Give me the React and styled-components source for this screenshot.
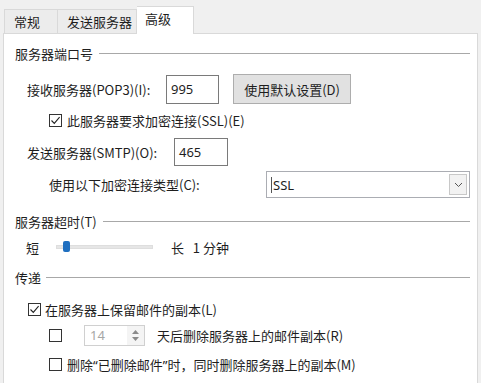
import React from "react";
import styled, { createGlobalStyle, css } from "styled-components";

const Global = createGlobalStyle`
  html, body { margin: 0; padding: 0; background: #f0f0f0; }
  body { font-family: "Noto Sans CJK SC", "Noto Sans", sans-serif; font-size: 13px; color: #1e1e1e; }
  * { box-sizing: border-box; }
`;

const Page = styled.div`
  width: 481px;
  height: 383px;
  overflow: hidden;
  background: #f0f0f0;
  padding: 0 3px 0 3px;
`;

const TabStrip = styled.div`
  display: flex;
  align-items: flex-end;
  height: 33px;
  padding-left: 1px;
  position: relative;
  z-index: 1;
`;

const Tab = styled.div`
  width: ${(p) => p.$w}px;
  height: 24px;
  display: flex;
  align-items: center;
  padding-left: ${(p) => p.$pl}px;
  border: 1px solid #d9d9d9;
  border-bottom: none;
  border-left-width: ${(p) => (p.$first ? "1px" : "0")};
  background: #ececec;
  color: #1e1e1e;
  line-height: 1;
  ${(p) =>
    p.$active &&
    css`
      height: 28px;
      background: #fff;
      margin-bottom: -1px;
      padding-bottom: 4px;
    `}
`;

const Panel = styled.div`
  background: #fff;
  border: 1px solid #d9d9d9;
  height: 360px;
  padding: 10px 7px 0 11px;
`;

const Row = styled.div`
  display: flex;
  align-items: center;
  height: ${(p) => p.$h || 18}px;
  margin-top: ${(p) => p.$mt || 0}px;
  padding-left: ${(p) => p.$indent || 0}px;
  white-space: nowrap;
`;

const GroupTitle = styled.span`
  padding-right: ${(p) => p.$gap || 4}px;
`;

const Rule = styled.div`
  flex: 1;
  height: 1px;
  background: #a8a8a8;
  margin-top: 1px;
`;

const Label = styled.span`
  width: ${(p) => (p.$w ? `${p.$w}px` : "auto")};
  flex-shrink: 0;
`;

const Quote = styled.span`
  font-family: "Noto Sans", sans-serif;
`;

const TextBox = styled.div`
  width: ${(p) => p.$w}px;
  height: ${(p) => p.$h}px;
  border: 1px solid #7a7a7a;
  background: #fff;
  display: flex;
  align-items: center;
  padding-left: 4px;
  font-family: "Noto Sans", "Noto Sans CJK SC", sans-serif;
  font-size: 13px;
`;

const Button = styled.div`
  width: 118px;
  height: 30px;
  margin-left: 14px;
  border: 1px solid #adadad;
  background: #e1e1e1;
  display: flex;
  align-items: center;
  justify-content: center;
`;

const CheckBoxBox = styled.span`
  width: 13px;
  height: 13px;
  border: 1px solid #333;
  background: #fff;
  display: inline-flex;
  align-items: center;
  justify-content: center;
  flex-shrink: 0;
  margin-right: ${(p) => p.$mr}px;
`;

const Select = styled.div`
  width: 204px;
  height: 27px;
  border: 1px solid #abadb3;
  background: #fff;
  display: flex;
  align-items: center;
  padding: 2px 2px 2px 4px;
  font-family: "Noto Sans", sans-serif;
`;

const SelectText = styled.span`
  flex: 1;
  border-left: 1px solid #555;
  padding-left: 1px;
  line-height: 16px;
`;

const ArrowBox = styled.span`
  width: 18px;
  height: 21px;
  border: 1px solid #c8c8c8;
  background: #f2f2f2;
  display: flex;
  align-items: center;
  justify-content: center;
`;

const SliderTrack = styled.div`
  position: relative;
  width: 97px;
  height: 4px;
  background: #e6e6e6;
  border: 1px solid #dedede;
  margin: 0 18px 0 17px;
`;

const SliderThumb = styled.span`
  position: absolute;
  left: 6px;
  top: -5px;
  width: 7px;
  height: 11px;
  border-radius: 2px;
  background: #1f6fc0;
`;

const Spinner = styled.div`
  width: 61px;
  height: 21px;
  border: 1px solid #d0d0d0;
  display: flex;
  align-items: stretch;
  margin: 0 12px 0 ${(p) => p.$ml}px;
  color: #a6a6a6;
  font-family: "Noto Sans", sans-serif;
`;

const SpinValue = styled.span`
  flex: 1;
  display: flex;
  align-items: center;
  padding-left: 5px;
`;

const SpinButtons = styled.span`
  width: 17px;
  display: flex;
  flex-direction: column;
  justify-content: center;
  align-items: center;
  background: #f4f4f4;
  gap: 3px;
`;

const Check = () => (
  <svg width="11" height="11" viewBox="0 0 11 11">
    <path d="M1.5 5.5 L4.3 8.4 L9.6 2.2" fill="none" stroke="#222" strokeWidth="1.1" />
  </svg>
);

const CheckBox = ({ checked, mr = 5 }) => (
  <CheckBoxBox $mr={mr}>{checked && <Check />}</CheckBoxBox>
);

export default function App() {
  return (
    <>
      <Global />
      <Page>
        <TabStrip>
          <Tab $first $w={54} $pl={9}>常规</Tab>
          <Tab $w={79} $pl={9}>发送服务器</Tab>
          <Tab $active $w={57} $pl={8}>高级</Tab>
        </TabStrip>
        <Panel>
          <Row>
            <GroupTitle $gap={6}>服务器端口号</GroupTitle>
            <Rule />
          </Row>
          <Row $h={30} $mt={12} $indent={12}>
            <Label $w={139}>接收服务器(POP3)(I):</Label>
            <TextBox $w={53} $h={29}>995</TextBox>
            <Button>使用默认设置(D)</Button>
          </Row>
          <Row $mt={7} $indent={34}>
            <CheckBox checked mr={5} />
            <span>此服务器要求加密连接(SSL)(E)</span>
          </Row>
          <Row $h={28} $mt={9} $indent={12}>
            <Label $w={147}>发送服务器(SMTP)(O):</Label>
            <TextBox $w={54} $h={28}>465</TextBox>
          </Row>
          <Row $h={27} $mt={5} $indent={34}>
            <Label $w={217}>使用以下加密连接类型(C):</Label>
            <Select>
              <SelectText>SSL</SelectText>
              <ArrowBox>
                <svg width="9" height="6" viewBox="0 0 9 6">
                  <path d="M1 1 L4.5 4.5 L8 1" fill="none" stroke="#555" strokeWidth="1" />
                </svg>
              </ArrowBox>
            </Select>
          </Row>
          <Row $mt={14}>
            <GroupTitle $gap={6}>服务器超时(T)</GroupTitle>
            <Rule />
          </Row>
          <Row $mt={8} $indent={11}>
            <span>短</span>
            <SliderTrack>
              <SliderThumb />
            </SliderTrack>
            <span>长&nbsp;&nbsp;&nbsp;1 分钟</span>
          </Row>
          <Row $mt={12}>
            <GroupTitle $gap={5}>传递</GroupTitle>
            <Rule />
          </Row>
          <Row $mt={14} $indent={13}>
            <CheckBox checked mr={4} />
            <span>在服务器上保留邮件的副本(L)</span>
          </Row>
          <Row $h={20} $mt={7} $indent={34}>
            <CheckBox />
            <Spinner $ml={17}>
              <SpinValue>14</SpinValue>
              <SpinButtons>
                <svg width="7" height="4" viewBox="0 0 7 4"><path d="M0 4 L3.5 0 L7 4 Z" fill="#8a8a8a" /></svg>
                <svg width="7" height="4" viewBox="0 0 7 4"><path d="M0 0 L3.5 4 L7 0 Z" fill="#8a8a8a" /></svg>
              </SpinButtons>
            </Spinner>
            <span>天后删除服务器上的邮件副本(R)</span>
          </Row>
          <Row $mt={10} $indent={34}>
            <CheckBox mr={5} />
            <span>
              删除<Quote>“</Quote>已删除邮件<Quote>”</Quote>时，同时删除服务器上的副本(M)
            </span>
          </Row>
        </Panel>
      </Page>
    </>
  );
}
